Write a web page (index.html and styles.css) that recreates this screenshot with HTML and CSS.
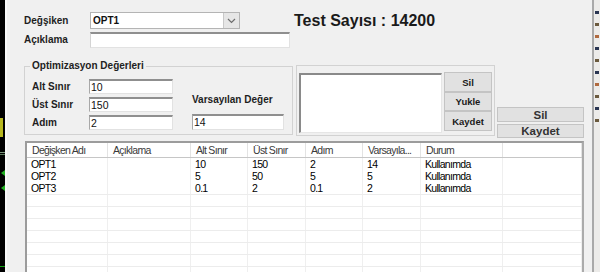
FILE: index.html
```html
<!DOCTYPE html>
<html lang="tr">
<head>
<meta charset="utf-8">
<title>Optimizasyon</title>
<link rel="stylesheet" href="styles.css">
</head>
<body>
<div class="screen">
  <div class="edge-left">
    <span class="mk mk-yellow"></span>
    <span class="mk mk-line1"></span>
    <span class="mk mk-line2"></span>
    <span class="mk mk-tri1"></span>
    <span class="mk mk-tri2"></span>
    <span class="mk mk-line3"></span>
  </div>
  <div class="dialog">
    <div class="row row-top">
      <span class="lbl lbl-col">Değşiken</span>
      <div class="combo">
        <span class="combo-text">OPT1</span>
        <span class="combo-btn"><svg width="9" height="6" viewBox="0 0 9 6"><polyline points="1,1 4.5,4.5 8,1" fill="none" stroke="#6d6d6d" stroke-width="1.2"/></svg></span>
      </div>
      <div class="test">Test Sayısı : 14200</div>
    </div>
    <div class="row row-desc">
      <span class="lbl lbl-col">Açıklama</span>
      <div class="input input-wide"></div>
    </div>
    <div class="groups">
      <fieldset class="grp1">
        <legend>Optimizasyon Değerleri</legend>
        <div class="grp1-body">
          <div class="limits">
            <span class="lbl">Alt Sınır</span><div class="input">10</div>
            <span class="lbl">Üst Sınır</span><div class="input">150</div>
            <span class="lbl">Adım</span><div class="input">2</div>
          </div>
          <div class="default">
            <span class="lbl lbl-def">Varsayılan Değer</span>
            <div class="input input-def">14</div>
          </div>
        </div>
      </fieldset>
      <div class="grp2">
        <div class="listbox"></div>
        <div class="btn-stack">
          <button class="btn btn-s1">Sil</button>
          <button class="btn btn-s2">Yukle</button>
          <button class="btn btn-s3">Kaydet</button>
        </div>
      </div>
      <div class="outer-btns">
        <button class="btn btn-big btn-sil">Sil</button>
        <button class="btn btn-big btn-kay">Kaydet</button>
      </div>
    </div>
    <div class="listview">
      <div class="lv-row lv-head">
        <span class="c">Değişken Adı</span><span class="c">Açıklama</span><span class="c">Alt Sınır</span><span class="c">Üst Sınır</span><span class="c">Adım</span><span class="c">Varsayıla...</span><span class="c">Durum</span><span class="c"></span>
      </div>
      <div class="lv-row">
        <span class="c">OPT1</span><span class="c"></span><span class="c">10</span><span class="c">150</span><span class="c">2</span><span class="c">14</span><span class="c">Kullanımda</span><span class="c"></span>
      </div>
      <div class="lv-row">
        <span class="c">OPT2</span><span class="c"></span><span class="c">5</span><span class="c">50</span><span class="c">5</span><span class="c">5</span><span class="c">Kullanımda</span><span class="c"></span>
      </div>
      <div class="lv-row">
        <span class="c">OPT3</span><span class="c"></span><span class="c">0.1</span><span class="c">2</span><span class="c">0.1</span><span class="c">2</span><span class="c">Kullanımda</span><span class="c"></span>
      </div>
      <div class="lv-row lv-empty"><span class="c"></span><span class="c"></span><span class="c"></span><span class="c"></span><span class="c"></span><span class="c"></span><span class="c"></span><span class="c"></span></div>
      <div class="lv-row lv-empty"><span class="c"></span><span class="c"></span><span class="c"></span><span class="c"></span><span class="c"></span><span class="c"></span><span class="c"></span><span class="c"></span></div>
      <div class="lv-row lv-empty"><span class="c"></span><span class="c"></span><span class="c"></span><span class="c"></span><span class="c"></span><span class="c"></span><span class="c"></span><span class="c"></span></div>
      <div class="lv-row lv-empty"><span class="c"></span><span class="c"></span><span class="c"></span><span class="c"></span><span class="c"></span><span class="c"></span><span class="c"></span><span class="c"></span></div>
      <div class="lv-row lv-empty"><span class="c"></span><span class="c"></span><span class="c"></span><span class="c"></span><span class="c"></span><span class="c"></span><span class="c"></span><span class="c"></span></div>
      <div class="lv-row lv-empty"><span class="c"></span><span class="c"></span><span class="c"></span><span class="c"></span><span class="c"></span><span class="c"></span><span class="c"></span><span class="c"></span></div>
      <div class="lv-row lv-empty"><span class="c"></span><span class="c"></span><span class="c"></span><span class="c"></span><span class="c"></span><span class="c"></span><span class="c"></span><span class="c"></span></div>
    </div>
  </div>
  <div class="divider"></div>
  <div class="edge-right">
    <span class="rm rm-a"></span><span class="rm rm-b"></span><span class="rm rm-c"></span><span class="rm rm-a"></span><span class="rm rm-b"></span><span class="rm rm-a"></span><span class="rm rm-c"></span><span class="rm rm-b"></span><span class="rm rm-a"></span><span class="rm rm-b"></span>
  </div>
</div>
</body>
</html>
```
FILE: styles.css
```css
* { box-sizing: border-box; }
html, body { margin: 0; padding: 0; }
body {
  width: 600px;
  height: 272px;
  overflow: hidden;
  background: #f0f0f0;
  font-family: "Liberation Sans", Arial, sans-serif;
  color: #1c1c1c;
}
.screen {
  display: flex;
  width: 600px;
  height: 272px;
  overflow: hidden;
}

/* left black chart edge */
.edge-left {
  position: relative;
  width: 5px;
  flex: none;
  background: #000;
}
.mk { position: absolute; display: block; }
.mk-yellow { left: 0; top: 118px; width: 3px; height: 19px; background: #b8b820; }
.mk-line1 { left: 0; top: 152px; width: 5px; height: 1px; background: #7d987d; }
.mk-line2 { left: 0; top: 154px; width: 5px; height: 1px; background: #5c7a5c; }
.mk-tri1, .mk-tri2 {
  left: 1px; width: 0; height: 0;
  border-top: 3px solid transparent;
  border-bottom: 3px solid transparent;
  border-right: 4px solid #22b022;
}
.mk-tri1 { top: 170px; }
.mk-tri2 { top: 185px; }
.mk-line3 { left: 0; top: 266px; width: 5px; height: 1px; background: #10a010; }

/* dialog */
.dialog {
  width: 587px;
  flex: none;
  background: #f0f0f0;
  border-left: 2px solid #f9f9f9;
  padding: 12px 0 0 17px;
}
.row { display: flex; align-items: center; }
.row-top { height: 17px; }
.row-desc { height: 16px; margin-top: 3px; }
.lbl {
  font-size: 10px;
  font-weight: bold;
  line-height: 12px;
  color: #1e1e1e;
  white-space: nowrap;
}
.lbl-col { width: 66px; flex: none; }

.combo {
  width: 150px;
  height: 17px;
  background: #fff;
  border: 1px solid #b4b4b4;
  display: flex;
  align-items: stretch;
}
.combo-text {
  flex: 1;
  font-size: 10px;
  font-weight: bold;
  line-height: 15px;
  padding-left: 2px;
  color: #111;
}
.combo-btn {
  width: 16px;
  background: #e6e6e6;
  border-left: 1px solid #c9c9c9;
  display: flex;
  align-items: center;
  justify-content: center;
}
.test {
  margin-left: 54px;
  font-size: 16px;
  font-weight: bold;
  line-height: 17px;
  color: #1a1a1a;
  white-space: nowrap;
}

.input {
  height: 15px;
  background: #fff;
  border-top: 2px solid #8f8f8f;
  border-left: 1px solid #a8a8a8;
  border-right: 1px solid #e2e2e2;
  border-bottom: 1px solid #e2e2e2;
  font-size: 10.5px;
  line-height: 12px;
  padding-left: 1px;
  color: #111;
}
.input-wide { width: 200px; height: 16px; border-left-color: #d4d4d4; }

/* groups row */
.groups {
  display: flex;
  align-items: flex-start;
  margin-top: 12px;
}
.grp1 {
  width: 269px;
  margin: 0;
  padding: 7px 0 4px 7px;
  border: 1px solid #d2d2d2;
  min-width: 0;
}
.grp1 legend {
  font-size: 10px;
  font-weight: bold;
  line-height: 12px;
  padding: 0 2px;
  margin-left: -2px;
  color: #222;
}
.grp1-body { display: flex; align-items: flex-end; }
.limits {
  display: grid;
  grid-template-columns: 57px 84px;
  grid-auto-rows: 15px;
  row-gap: 3px;
  align-items: center;
}
.default {
  margin-left: 19px;
  display: flex;
  flex-direction: column;
  align-items: flex-start;
}
.lbl-def { margin-bottom: 8px; }
.input-def { width: 92px; height: 16px; }

.grp2 {
  width: 199px;
  height: 71px;
  margin: 5px 0 0 3px;
  border: 1px solid #d2d2d2;
  padding: 6px 2px 0 2px;
  display: flex;
  gap: 2px;
}
.listbox {
  width: 143px;
  height: 60px;
  margin-top: 1px;
  background: #fff;
  border-top: 2px solid #8a8a8a;
  border-left: 2px solid #8a8a8a;
  border-right: 1px solid #e6e6e6;
  border-bottom: 1px solid #e6e6e6;
}
.btn-stack { width: 48px; display: flex; flex-direction: column; }
.btn {
  margin: 0;
  padding: 0;
  background: #e1e1e1;
  border: 1px solid #c4c4c4;
  font-family: "Liberation Sans", Arial, sans-serif;
  font-weight: bold;
  font-size: 9.5px;
  color: #1a1a1a;
  width: 100%;
}
.btn-s1 { height: 20px; }
.btn-s2 { height: 19px; }
.btn-s3 { height: 20px; }

.outer-btns {
  width: 87px;
  margin: 47px 0 0 2px;
  display: flex;
  flex-direction: column;
  gap: 2px;
}
.btn-big { font-size: 11.5px; color: #333; line-height: 12px; }
.btn-sil { height: 15px; }
.btn-kay { height: 14px; }

/* listview */
.listview {
  width: 559px;
  height: 140px;
  margin: 3px 0 0 1px;
  background: #fff;
  border-top: 2px solid #9c9c9c;
  border-left: 2px solid #9c9c9c;
  border-right: 2px solid #ababab;
  overflow: hidden;
}
.lv-row {
  display: grid;
  grid-template-columns: 81px 83px 57px 58px 57px 58px 82px 1fr;
  height: 12px;
}
.c {
  border-right: 1px solid #efefef;
  padding-left: 4px;
  font-family: "Liberation Sans", Arial, sans-serif;
  font-size: 10.5px;
  letter-spacing: -0.7px;
  line-height: 12px;
  color: #000;
  white-space: nowrap;
  overflow: hidden;
}
.lv-head {
  height: 15px;
  border-bottom: 1px solid #c6c6c6;
}
.lv-head .c {
  border-right-color: #e3e3e3;
  padding-left: 5px;
  line-height: 14px;
  color: #3a3a3a;
}
.lv-empty { border-top: 1px solid #ececec; }

.divider { width: 2px; flex: none; background: #a9a9a9; }
.edge-right {
  flex: 1;
  background: #ecebe9;
  display: flex;
  flex-direction: column;
  gap: 9px;
  padding: 11px 0 0 1px;
}
.rm { display: block; width: 4px; height: 3px; flex: none; }
.rm-a { background: #2a3552; }
.rm-b { background: #6b5a3e; }
.rm-c { background: #b06a40; }
```
